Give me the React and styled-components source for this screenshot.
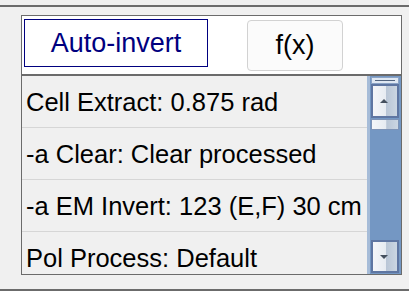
import styled, { createGlobalStyle } from "styled-components"

const GlobalStyle = createGlobalStyle`
  html, body {
    margin: 0;
    padding: 0;
    background: #f0f0f0;
    font-family: "Liberation Sans", Arial, sans-serif;
  }
`

const Page = styled.div`
  width: 409px;
  height: 291px;
  overflow: hidden;
  display: flex;
  flex-direction: column;
`

const Rule = styled.div`
  height: 2px;
  background: #6b6b6b;
  margin-top: ${p => p.$top}px;
`

const Panel = styled.div`
  margin: 8px 0 0 21px;
  width: 379px;
  height: 258px;
  border: 1px solid #6b6b6b;
  display: flex;
  flex-direction: column;
`

const Header = styled.div`
  height: 60px;
  flex-shrink: 0;
  background: #ffffff;
  border-bottom: 2px solid #6b6b6b;
  display: flex;
  align-items: flex-start;
  padding: 3px 0 0 2px;
  box-sizing: border-box;
`

const ToggleButton = styled.div`
  width: 184px;
  height: 48px;
  box-sizing: border-box;
  border: 1px solid #00007f;
  color: #00007f;
  font-size: 27px;
  display: flex;
  align-items: center;
  justify-content: center;
  padding-top: 1px;
`

const FxButton = styled.div`
  margin: 1px 0 0 39px;
  width: 96px;
  height: 51px;
  box-sizing: border-box;
  border: 1px solid #d2d2d2;
  border-radius: 4px;
  background: #fbfbfb;
  color: #000;
  font-size: 27px;
  display: flex;
  align-items: center;
  justify-content: center;
`

const Body = styled.div`
  flex: 1;
  display: flex;
  overflow: hidden;
`

const List = styled.div`
  flex: 1;
  overflow: hidden;
`

const Row = styled.div`
  height: 52px;
  border-bottom: 1px solid #d6d6d6;
  display: flex;
  align-items: center;
  padding: 1px 0 0 4px;
  box-sizing: border-box;
  font-size: 25.5px;
  color: #000;
  white-space: nowrap;
`

const Scrollbar = styled.div`
  width: 34px;
  background: #7497c3;
  border-left: 3px solid #a6bcd8;
  box-sizing: border-box;
  display: flex;
  flex-direction: column;
  padding: 1px 2px 1px 1px;
`

const Grip = styled.div`
  height: 5px;
  background: #dfe8f3;
  border: 1px solid #8aa3c6;
  display: flex;
  align-items: center;
  justify-content: center;
  &::after {
    content: "";
    width: 20px;
    height: 1px;
    background: #51637e;
  }
`

const ArrowButton = styled.div`
  height: ${p => p.$h}px;
  box-sizing: border-box;
  border: 2px solid #5e76a2;
  background: linear-gradient(90deg, #f4f6f9 0%, #e6ebf1 55%, #b9c6d6 56%, #cbd6e2 100%);
  display: flex;
  align-items: center;
  justify-content: center;
`

const Arrow = styled.div`
  width: 0;
  height: 0;
  border-left: 4px solid transparent;
  border-right: 4px solid transparent;
  ${p => p.$down ? "border-top: 4px solid #45505e;" : "border-bottom: 4px solid #45505e;"}
  margin-right: 2px;
`

const Thumb = styled.div`
  height: 9px;
  margin-top: 1px;
  border: 1px solid #7d93b6;
  background: linear-gradient(90deg, #f4f6f9 0%, #e6ebf1 55%, #b9c6d6 56%, #cbd6e2 100%);
`

const Track = styled.div`
  flex: 1;
`

const rows = [
  "Cell Extract: 0.875 rad",
  "-a Clear: Clear processed",
  "-a EM Invert: 123 (E,F) 30 cm",
  "Pol Process: Default",
]

export default function App() {
  return (
    <>
      <GlobalStyle />
      <Page>
        <Rule $top={5} />
        <Panel>
          <Header>
            <ToggleButton>Auto-invert</ToggleButton>
            <FxButton>f(x)</FxButton>
          </Header>
          <Body>
            <List>
              {rows.map(r => <Row key={r}>{r}</Row>)}
            </List>
            <Scrollbar>
              <Grip />
              <ArrowButton $h={34}><Arrow /></ArrowButton>
              <Thumb />
              <Track />
              <ArrowButton $h={33}><Arrow $down /></ArrowButton>
            </Scrollbar>
          </Body>
        </Panel>
        <Rule $top={14} />
      </Page>
    </>
  )
}
